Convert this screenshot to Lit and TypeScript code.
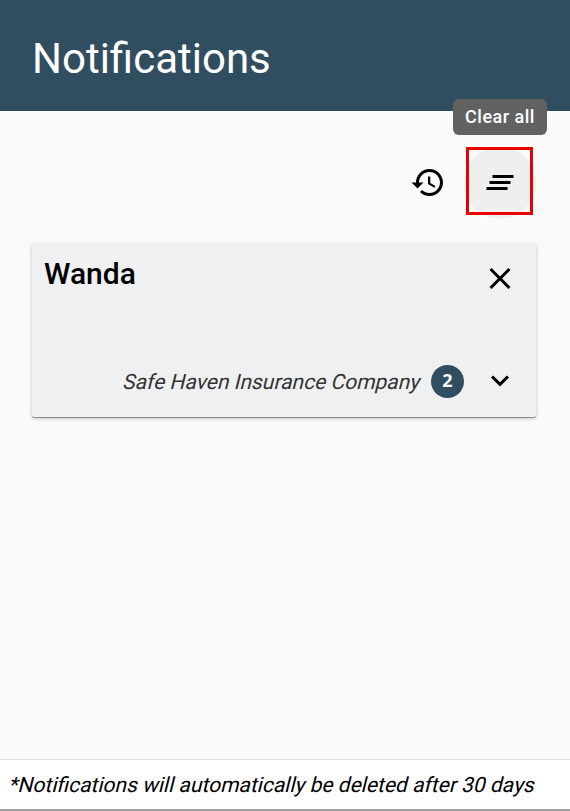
import { LitElement, html, css } from "lit";
import { customElement } from "lit/decorators.js";

const icon = (d: string) => html`<svg class="icon" viewBox="0 0.333 24 24" aria-hidden="true"><path d=${d}></path></svg>`;

const HISTORY =
  "M13 3c-4.97 0-9 4.03-9 9H1l3.89 3.89.07.14L9 12H6c0-3.87 3.13-7 7-7s7 3.13 7 7-3.13 7-7 7c-1.93 0-3.68-.79-4.94-2.06l-1.42 1.42C8.27 19.99 10.51 21 13 21c4.97 0 9-4.03 9-9s-4.03-9-9-9zm-1 5v5l4.28 2.54.72-1.21-3.5-2.08V8H12z";
const CLEAR_ALL = "M5 13h14v-2H5v2zm-2 4h14v-2H3v2zM7 7v2h14V7H7z";
const CLOSE =
  "M19 6.41L17.59 5 12 10.59 6.41 5 5 6.41 10.59 12 5 17.59 6.41 19 12 13.41 17.59 19 19 17.59 13.41 12z";
const EXPAND = "M16.59 8.59L12 13.17 7.41 8.59 6 10l6 6 6-6z";

@customElement("app-root")
export class AppRoot extends LitElement {
  static styles = css`
    :host {
      display: flex;
      flex-direction: column;
      box-sizing: border-box;
      width: 100%;
      height: 100vh;
      overflow: hidden;
      background: #fafafa;
      color: #000;
      font-family: Roboto, sans-serif;
    }
    header {
      display: flex;
      align-items: center;
      height: 111px;
      padding: 6px 32px 0;
      box-sizing: border-box;
      background: #314e60;
      color: #fff;
    }
    h1, h2, p { margin: 0; }
    h1 {
      font-size: 42px;
      font-weight: 400;
      line-height: 48px;
    }
    button {
      display: grid;
      place-items: center;
      width: 72px;
      height: 72px;
      padding: 0 0 1px;
      box-sizing: border-box;
      border: 0;
      border-radius: 50%;
      background: transparent;
      color: inherit;
    }
    .icon {
      display: block;
      width: 36px;
      height: 36px;
      fill: currentColor;
    }
    .toolbar {
      display: flex;
      justify-content: flex-end;
      height: 72px;
      padding: 36px 34px 24px;
    }
    .clear { position: relative; }
    .clear button { background: #efefef; }
    .focus {
      position: absolute;
      inset: 0 3px 4px 2px;
      border: 3px solid #eb0000;
    }
    .tooltip {
      position: absolute;
      right: -11px;
      top: -48px;
      width: 94px;
      height: 36px;
      border-radius: 6px;
      background: #616161;
      color: #fff;
      font-size: 18px;
      font-weight: 500;
      letter-spacing: 0.5px;
      line-height: 36px;
      text-align: center;
      white-space: nowrap;
    }
    main { flex: 1; }
    .card {
      display: flex;
      flex-direction: column;
      justify-content: space-between;
      box-sizing: border-box;
      height: 174px;
      margin: 0 34px 0 32px;
      background: #eff0f2;
      border-radius: 2px;
      box-shadow: 0 1px 1px rgba(0, 0, 0, 0.4), 0 2px 4px rgba(0, 0, 0, 0.16);
    }
    .row {
      display: flex;
      height: 72px;
    }
    .top { justify-content: space-between; padding-left: 12px; }
    h2 {
      padding-top: 13px;
      font-size: 30px;
      font-weight: 500;
      line-height: 36px;
    }
    .bottom {
      align-items: center;
      justify-content: flex-end;
    }
    .slanted {
      transform: skewX(-14deg);
      transform-origin: 0 75%;
    }
    .company {
      padding-top: 1px;
      color: #333;
      font-size: 21px;
      line-height: 28px;
    }
    .badge {
      width: 33px;
      height: 33px;
      margin-left: 12px;
      border-radius: 50%;
      background: #314e60;
      color: #fff;
      font-family: "Open Sans", sans-serif;
      font-size: 18px;
      font-weight: 700;
      line-height: 31px;
      text-align: center;
    }
    footer {
      height: 49px;
      padding-left: 9px;
      border-top: 1px solid #e0e0e0;
      border-bottom: 2px solid #a0a0a3;
      background: #fff;
      font-size: 21px;
      line-height: 28px;
      white-space: nowrap;
    }
    footer p { padding-top: 11px; }
  `;

  render() {
    return html`
      <header><h1>Notifications</h1></header>
      <div class="toolbar">
        <button aria-label="History">${icon(HISTORY)}</button>
        <div class="clear">
          <button aria-label="Clear all">${icon(CLEAR_ALL)}</button>
          <div class="focus"></div>
          <div class="tooltip" role="tooltip">Clear all</div>
        </div>
      </div>
      <main>
        <section class="card">
          <div class="row top">
            <h2>Wanda</h2>
            <button aria-label="Dismiss">${icon(CLOSE)}</button>
          </div>
          <div class="row bottom">
            <p class="company slanted">Safe Haven Insurance Company</p>
            <span class="badge">2</span>
            <button aria-label="Expand">${icon(EXPAND)}</button>
          </div>
        </section>
      </main>
      <footer><p class="slanted">*Notifications will automatically be deleted after 30 days</p></footer>
    `;
  }
}
